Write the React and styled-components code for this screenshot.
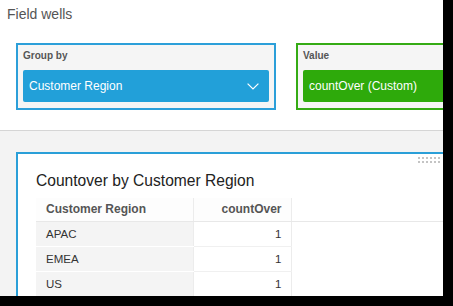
import React from "react";
import styled, { createGlobalStyle } from "styled-components";

const GlobalStyle = createGlobalStyle`
  html, body { margin: 0; padding: 0; background: #000; }
  body { font-family: "Liberation Sans", Arial, Helvetica, sans-serif; }
  * { box-sizing: border-box; }
`;

const Frame = styled.div`
  width: 453px;
  height: 306px;
  background: #000;
`;

const Screen = styled.div`
  width: 443px;
  height: 296px;
  overflow: hidden;
  background: #f3f3f3;
  display: flex;
  flex-direction: column;
`;

const TopPanel = styled.section`
  flex: none;
  height: 131px;
  background: #fff;
  border-bottom: 1px solid #d5d5d5;
  padding: 6px 0 0 7px;
`;

const Heading = styled.h2`
  margin: 0;
  font-size: 14px;
  line-height: 16px;
  font-weight: normal;
  color: #555;
`;

const Wells = styled.div`
  display: flex;
  gap: 20px;
  margin: 21px 0 0 9px;
`;

const Well = styled.div`
  flex: none;
  width: 260px;
  height: 67px;
  border: 2px solid ${(p) => p.$color};
  background: #f5f5f5;
  padding: 5px 5px 6px 5px;
  display: flex;
  flex-direction: column;
`;

const WellLabel = styled.div`
  font-size: 10px;
  line-height: 12px;
  font-weight: bold;
  color: #555;
`;

const Field = styled.div`
  margin-top: 8px;
  height: 32px;
  border-radius: 2px;
  background: ${(p) => p.$bg};
  color: #fff;
  font-size: 12px;
  display: flex;
  align-items: center;
  justify-content: space-between;
  padding: 0 10px 0 6px;
  white-space: nowrap;
`;

const CardArea = styled.div`
  flex: 1;
  display: flex;
  padding: 21px 0 0 16px;
  overflow: hidden;
`;

const Card = styled.div`
  flex: none;
  width: 460px;
  background: #fff;
  border-top: 2px solid #2a9fd8;
  border-left: 2px solid #2a9fd8;
  padding-left: 18px;
  display: flex;
  flex-direction: column;
`;

const HandleRow = styled.div`
  display: flex;
  padding: 3px 0 0 382px;
  height: 9px;
`;

const Title = styled.h3`
  margin: 9px 0 0 0;
  font-size: 15.6px;
  line-height: 18px;
  font-weight: normal;
  color: #222;
`;

const Table = styled.table`
  margin-top: 8px;
  border-collapse: collapse;
  width: 100%;
  font-size: 11.5px;
`;

const Th = styled.th`
  height: 23px;
  padding: 0 ${(p) => (p.$right ? "9px" : "10px")};
  text-align: ${(p) => (p.$right ? "right" : "left")};
  font-size: 12px;
  font-weight: bold;
  color: #555;
  background: ${(p) => (p.$last ? "#fff" : "#fdfdfd")};
  border-bottom: 1px solid #e8e8e8;
  border-right: ${(p) => (p.$last ? "none" : "1px solid #ececec")};
  width: ${(p) => p.$w || "auto"};
`;

const Td = styled.td`
  height: 25px;
  padding: 0 ${(p) => (p.$right ? "9px" : "10px")};
  text-align: ${(p) => (p.$right ? "right" : "left")};
  color: #333;
  background: ${(p) => (p.$shade ? "#f4f4f4" : "#fff")};
  border-bottom: 1px solid ${(p) => (p.$shade ? "#fff" : "#f0f0f0")};
  border-right: 1px solid #ececec;
`;

const Filler = styled.td`
  background: #fff;
  border: none;
`;

const Chevron = () => (
  <svg width="12" height="7" viewBox="0 0 12 7" fill="none">
    <path d="M0.6 0.6 L6 6 L11.4 0.6" stroke="#fff" strokeWidth="1.2" />
  </svg>
);

const DragHandle = () => (
  <svg width="24" height="6" viewBox="0 0 24 6">
    {[0, 1].map((r) =>
      [0, 1, 2, 3, 4, 5].map((c) => (
        <rect key={`${r}-${c}`} x={c * 4} y={r * 4} width="2" height="2" fill="#c4c4c4" />
      ))
    )}
  </svg>
);

const rows = [
  ["APAC", 1],
  ["EMEA", 1],
  ["US", 1],
];

export default function App() {
  return (
    <>
      <GlobalStyle />
      <Frame>
        <Screen>
          <TopPanel>
            <Heading>Field wells</Heading>
            <Wells>
              <Well $color="#2c9fd9">
                <WellLabel>Group by</WellLabel>
                <Field $bg="#22a0d9">
                  <span>Customer Region</span>
                  <Chevron />
                </Field>
              </Well>
              <Well $color="#35ab14">
                <WellLabel>Value</WellLabel>
                <Field $bg="#2eaa0b">
                  <span>countOver (Custom)</span>
                </Field>
              </Well>
            </Wells>
          </TopPanel>
          <CardArea>
            <Card>
              <HandleRow>
                <DragHandle />
              </HandleRow>
              <Title>Countover by Customer Region</Title>
              <Table>
                <thead>
                  <tr>
                    <Th $w="157px">Customer Region</Th>
                    <Th $w="98px" $right>countOver</Th>
                    <Th $last />
                  </tr>
                </thead>
                <tbody>
                  {rows.map(([region, v]) => (
                    <tr key={region}>
                      <Td $shade>{region}</Td>
                      <Td $right>{v}</Td>
                      <Filler />
                    </tr>
                  ))}
                </tbody>
              </Table>
            </Card>
          </CardArea>
        </Screen>
      </Frame>
    </>
  );
}
